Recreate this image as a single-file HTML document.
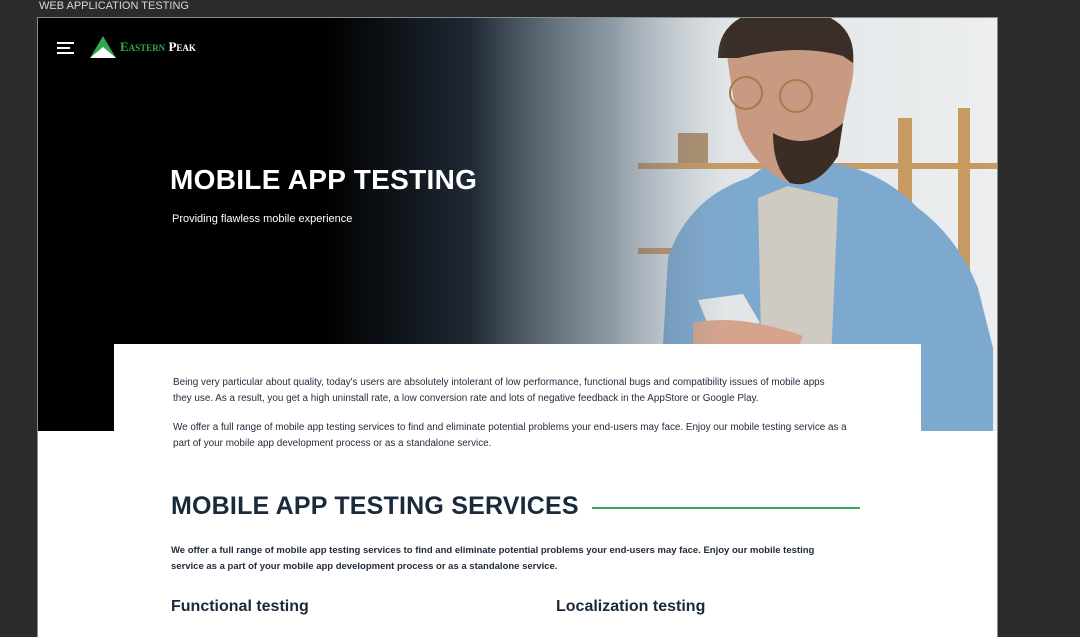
<!DOCTYPE html>
<html><head><meta charset="utf-8"><style>
*{margin:0;padding:0;box-sizing:border-box}
body{width:1080px;height:624px;background:#2b2b2b;position:relative;overflow:hidden;font-family:"Liberation Sans",sans-serif}
.top{position:absolute;left:39px;top:0;font-size:11px;color:#d8d8d8;line-height:12px}
.frame{position:absolute;left:37px;top:17px;width:961px;height:620px;border:1px solid #8a8a8a;border-bottom:none;background:#fff;overflow:hidden}
.hero{position:absolute;left:0;top:0;width:959px;height:413px;background:#000}
.t{position:absolute;color:#fff}
.card{position:absolute;left:76px;top:326px;width:807px;height:120px;background:#fff}
.p{position:absolute;font-size:9.5px;color:#1e2a3a;line-height:15.5px;white-space:nowrap}
.h2{position:absolute;left:133px;top:474px;font-size:25px;font-weight:bold;color:#1a2a3a;letter-spacing:0.2px}
.line{position:absolute;left:554px;top:489px;width:268px;height:2px;background:#3aab4e}
.h3{position:absolute;font-size:16px;font-weight:bold;color:#1a2a3a}
</style></head><body>
<div class="top">WEB APPLICATION TESTING</div>
<div class="frame">
<div class="hero">
<svg width="959" height="413" style="position:absolute;left:0;top:0">
<defs>
<linearGradient id="g" x1="0" x2="1"><stop offset="0" stop-color="#000" stop-opacity="1"/><stop offset="0.3" stop-color="#000" stop-opacity="1"/><stop offset="0.45" stop-color="#0a1420" stop-opacity="0.9"/><stop offset="0.6" stop-color="#40566a" stop-opacity="0.5"/><stop offset="0.72" stop-color="#8a9aa8" stop-opacity="0"/><stop offset="1" stop-color="#fff" stop-opacity="0"/></linearGradient>
<linearGradient id="bg" x1="0" x2="1"><stop offset="0" stop-color="#9aa9b6"/><stop offset="0.4" stop-color="#d4dade"/><stop offset="1" stop-color="#eceeef"/></linearGradient>
</defs>
<rect x="0" y="0" width="959" height="413" fill="url(#bg)"/>
<rect x="860" y="100" width="14" height="230" fill="#c79a62"/>
<rect x="920" y="90" width="12" height="170" fill="#c79a62"/>
<rect x="640" y="115" width="30" height="30" fill="#b08f6c"/>
<rect x="600" y="145" width="359" height="6" fill="#c79a62"/>
<rect x="600" y="230" width="60" height="6" fill="#c79a62"/>
<path d="M620 413 L630 240 Q650 180 710 160 L740 140 L790 145 Q840 150 880 190 Q920 220 940 270 L955 330 L955 413 Z" fill="#7ea9cf"/>
<path d="M720 180 L750 168 L800 180 L790 413 L725 413 Z" fill="#cfcac2"/>
<path d="M690 45 Q685 10 730 5 L800 5 Q825 30 810 80 L800 130 Q775 165 752 165 Q715 150 700 110 Z" fill="#c99a82"/>
<path d="M680 40 Q680 -5 740 -10 Q820 -10 815 45 L805 38 Q760 25 700 40 Z" fill="#3a2e28"/>
<path d="M735 115 Q770 135 805 105 L800 138 Q778 172 752 165 Q735 150 735 115 Z" fill="#3b2d24"/>
<circle cx="708" cy="75" r="16" fill="none" stroke="#a77a4b" stroke-width="2"/>
<circle cx="758" cy="78" r="16" fill="none" stroke="#a77a4b" stroke-width="2"/>
<path d="M660 282 L705 276 L722 305 L672 312 Z" fill="#e4e6e8"/>
<path d="M655 305 Q700 295 765 318 L760 330 L655 330 Z" fill="#d6a48d"/>
<rect x="0" y="0" width="959" height="413" fill="url(#g)"/>
</svg>
</div>
<svg style="position:absolute;left:19px;top:23px" width="18" height="14"><g stroke="#fff" stroke-width="2"><line x1="0" y1="2" x2="17" y2="2"/><line x1="0" y1="7" x2="13" y2="7"/><line x1="0" y1="12" x2="17" y2="12"/></g></svg>
<svg style="position:absolute;left:52px;top:18px" width="28" height="24"><path d="M13 0 L26 22 L13 14 L0 22 Z" fill="#2fa84f"/><path d="M13 11 L26 22 L0 22 Z" fill="#fff"/></svg>
<div class="t" style="left:82px;top:21px;font-family:'Liberation Serif',serif;font-weight:bold;font-size:13px;font-variant:small-caps"><span style="color:#2fa84f">Eastern</span> Peak</div>
<div class="t" style="left:132px;top:146px;font-size:28px;font-weight:bold;letter-spacing:0.3px">MOBILE APP TESTING</div>
<div class="t" style="left:134px;top:195px;font-size:11px">Providing flawless mobile experience</div>
<div class="card"></div>
<div class="p" style="left:135px;top:357px;font-size:9.9px">Being very particular about quality, today's users are absolutely intolerant of low performance, functional bugs and compatibility issues of mobile apps<br>they use. As a result, you get a high uninstall rate, a low conversion rate and lots of negative feedback in the AppStore or Google Play.</div>
<div class="p" style="left:135px;top:402px;font-size:9.9px">We offer a full range of mobile app testing services to find and eliminate potential problems your end-users may face. Enjoy our mobile testing service as a<br>part of your mobile app development process or as a standalone service.</div>
<div class="h2">MOBILE APP TESTING SERVICES</div>
<div class="line"></div>
<div class="p" style="left:133px;top:525px;font-weight:bold;font-size:9.5px">We offer a full range of mobile app testing services to find and eliminate potential problems your end-users may face. Enjoy our mobile testing<br>service as a part of your mobile app development process or as a standalone service.</div>
<div class="h3" style="left:133px;top:580px">Functional testing</div>
<div class="h3" style="left:518px;top:580px">Localization testing</div>
</div>
</body></html>
